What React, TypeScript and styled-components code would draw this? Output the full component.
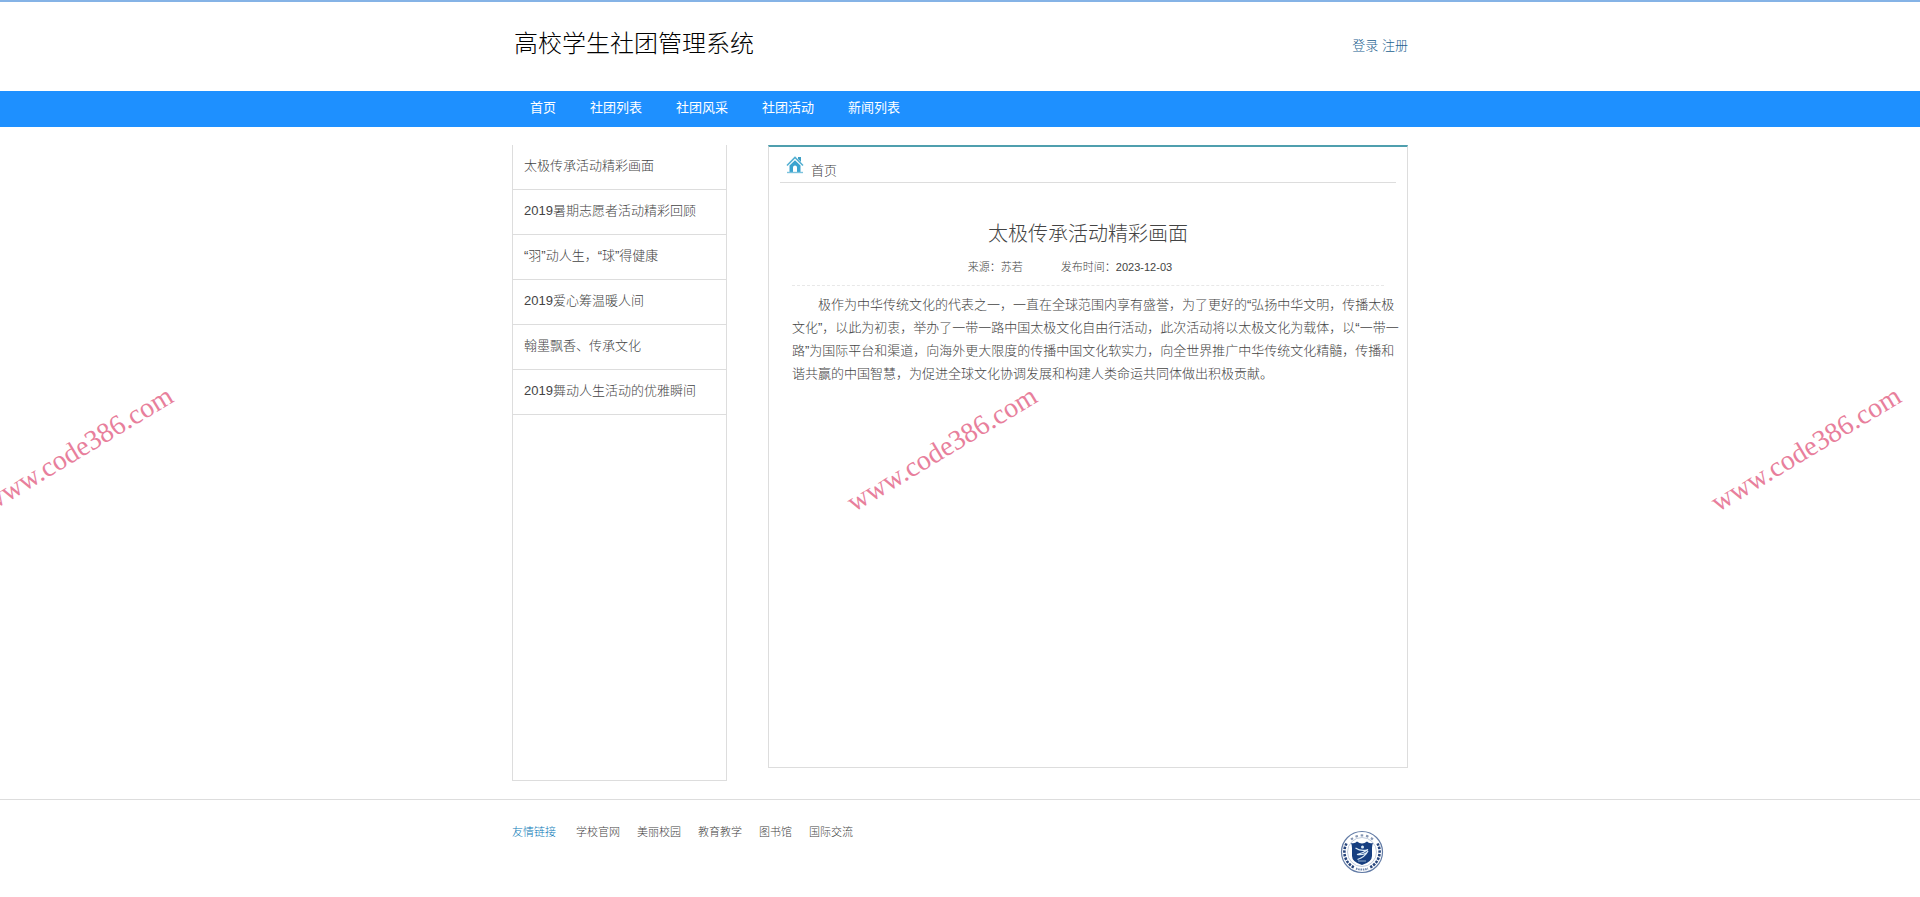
import React from "react";
import styled, { createGlobalStyle } from "styled-components";

const GlobalStyle = createGlobalStyle`
  *, *::before, *::after { box-sizing: border-box; }
  body {
    margin: 0;
    background: #fff;
    color: #444;
    font-family: "Liberation Sans", "Noto Sans CJK SC", sans-serif;
    font-size: 13px;
    font-weight: 300;
  }
  h1, h2, p, ul { margin: 0; padding: 0; font-weight: inherit; }
  ul { list-style: none; }
  a { color: inherit; text-decoration: none; }
`;

const Page = styled.div`
  position: relative;
  min-height: 100vh;
  border-top: 2px solid #85b3e6;
`;

const Container = styled.div`
  width: 100%;
  max-width: 896px;
  margin: 0 auto;
`;

const Header = styled(Container)`
  display: flex;
  align-items: center;
  justify-content: space-between;
  height: 89px;
`;

const SiteTitle = styled.h1`
  padding: 0 0 6px 2px;
  color: #000;
  font-size: 24px;
  line-height: 32px;
`;

const Account = styled.div`
  padding-bottom: 2px;
  color: #235f8f;
  line-height: 20px;
`;

const NavBar = styled.nav`
  background: #1e90ff;
`;

const NavList = styled.ul`
  display: flex;
  padding-left: 1px;
`;

const NavLink = styled.a`
  display: block;
  padding: 0 17px 2px;
  color: #fff;
  line-height: 34px;
  font-weight: 400;
`;

const Columns = styled(Container)`
  display: flex;
  justify-content: space-between;
  align-items: flex-start;
  gap: 40px;
  padding: 18px 0;
`;

const Sidebar = styled.aside`
  flex: 0 0 215px;
  min-height: 636px;
  border: 1px solid #ddd;
  border-top: 0;
`;

const SideLink = styled.a`
  display: block;
  padding: 0 11px 2px;
  border-bottom: 1px solid #ddd;
  line-height: 42px;
  white-space: nowrap;
`;

const Panel = styled.main`
  flex: 0 1 640px;
  min-width: 0;
  min-height: 623px;
  padding: 0 11px;
  border: 1px solid #ddd;
  border-top: 2px solid #4f9fae;
`;

const Crumbs = styled.div`
  display: flex;
  align-items: center;
  gap: 7px;
  height: 36px;
  padding-left: 6px;
  border-bottom: 1px solid #ddd;
`;

const CrumbLink = styled.a`
  padding-top: 12px;
  line-height: 20px;
`;

const Article = styled.article`
  padding: 33px 0 0 12px;
`;

const ArticleTitle = styled.h2`
  padding-right: 12px;
  font-size: 20px;
  line-height: 36px;
  text-align: center;
`;

const Meta = styled.div`
  display: flex;
  justify-content: center;
  gap: 38px;
  margin-right: 12px;
  padding: 5px 36px 8px 0;
  border-bottom: 1px dashed #e8e8e8;
  font-size: 11px;
  line-height: 20px;
`;

const Body = styled.p`
  padding-top: 7px;
  line-height: 23px;
  text-indent: 2em;
  white-space: nowrap;
`;

const Footer = styled.footer`
  border-top: 1px solid #ddd;
`;

const FooterRow = styled(Container)`
  display: flex;
  justify-content: space-between;
  padding: 22px 24px 22px 0;
`;

const FriendLinks = styled.ul`
  display: flex;
  gap: 17px;
  font-size: 11px;
  line-height: 20px;
`;

const FriendLabel = styled.li`
  padding-right: 3px;
  color: #0878b6;
`;

const Crest = styled.svg`
  margin-top: 8px;
`;

const Watermarks = styled.div`
  position: absolute;
  inset: 0;
  display: flex;
  justify-content: center;
  padding: 433px 36px 0 0;
  overflow: hidden;
  pointer-events: none;
`;

const Mark = styled.span`
  flex: 0 0 864px;
  height: 28px;
  color: #e87f9c;
  font-family: "Liberation Serif", serif;
  font-size: 28px;
  font-weight: 400;
  line-height: 28px;
  text-align: center;
  transform: rotate(-31deg);
`;

const navItems = ["首页", "社团列表", "社团风采", "社团活动", "新闻列表"];
const sideItems = [
  "太极传承活动精彩画面",
  "2019暑期志愿者活动精彩回顾",
  "“羽”动人生，“球”得健康",
  "2019爱心筹温暖人间",
  "翰墨飘香、传承文化",
  "2019舞动人生活动的优雅瞬间",
];
const friendItems = ["学校官网", "美丽校园", "教育教学", "图书馆", "国际交流"];

function HomeIcon() {
  return (
    <svg width="18" height="18" viewBox="0 0 18 18" aria-hidden="true">
      <path d="M12 1h3v5l-3-3z" fill="#3d9fc6" />
      <path d="M1 9.5 9 1.5l8 8" fill="none" stroke="#55b0d2" strokeWidth="1.6" />
      <path d="M3.5 9.5 9 4.2l5.5 5.3V16H11v-4.5a2 2 0 0 0-4 0V16H3.5z" fill="#3aa3cf" />
      <path d="M1 16.5h16" stroke="#7cc3dd" strokeWidth="1.4" />
    </svg>
  );
}

function SchoolCrest() {
  return (
    <Crest width="44" height="44" viewBox="0 0 44 44" role="img" aria-label="校徽">
      <circle cx="22" cy="22" r="20.5" fill="#fff" stroke="#637ca6" strokeWidth="1.2" />
      <circle cx="22" cy="22" r="14.5" fill="none" stroke="#a5b5cd" strokeWidth="0.7" />
      <path d="M6.5 13.5A17.500 17.500 0 0 0 14 37.500" fill="none" stroke="#27457c" strokeWidth="2.6" strokeDasharray="2.4 1.2" />
      <path d="M37.5 13.5A17.500 17.500 0 0 1 30 37.500" fill="none" stroke="#27457c" strokeWidth="2.6" strokeDasharray="2.4 1.2" />
      <path d="M11 9.5A17 17 0 0 1 33 9.5" fill="none" stroke="#8797b4" strokeWidth="2.2" strokeDasharray="2.5 2.8" />
      <path d="M16 38.5a17.500 17.500 0 0 0 12 0" fill="none" stroke="#6f86ad" strokeWidth="2" strokeDasharray="1.5 0.8" />
      <path d="M11 13q4 1 6-1.500 2.500 2 5 2t5-2q2 2.500 6 1.500-1 2-1 5v8q0 6-10 9-10-3-10-9v-8q0-3-1-5z" fill="#173f80" />
      <circle cx="22.5" cy="17" r="1.5" fill="#dcebf6" />
      <path d="M15.500 18q6 4 12.500 1.500-5 4-11 5 8 1 11-3.500-3 6-10.500 8.500" fill="none" stroke="#dcebf6" strokeWidth="1.2" />
      <path d="M18 31h8" stroke="#8eabc9" strokeWidth="1" />
    </Crest>
  );
}

export default function App() {
  return (
    <Page>
      <GlobalStyle />
      <Header as="header">
        <SiteTitle>高校学生社团管理系统</SiteTitle>
        <Account>
          <a href="#login">登录</a> <a href="#register">注册</a>
        </Account>
      </Header>
      <NavBar>
        <Container>
          <NavList>
            {navItems.map((item) => (
              <li key={item}>
                <NavLink href="#">{item}</NavLink>
              </li>
            ))}
          </NavList>
        </Container>
      </NavBar>
      <Columns>
        <Sidebar>
          <ul>
            {sideItems.map((item) => (
              <li key={item}>
                <SideLink href="#">{item}</SideLink>
              </li>
            ))}
          </ul>
        </Sidebar>
        <Panel>
          <Crumbs>
            <HomeIcon />
            <CrumbLink href="#">首页</CrumbLink>
          </Crumbs>
          <Article>
            <ArticleTitle>太极传承活动精彩画面</ArticleTitle>
            <Meta>
              <span>来源：苏若</span>
              <span>发布时间：2023-12-03</span>
            </Meta>
            <Body>
              极作为中华传统文化的代表之一，一直在全球范围内享有盛誉，为了更好的“弘扬中华文明，传播太极
              <br />
              文化”，以此为初衷，举办了一带一路中国太极文化自由行活动，此次活动将以太极文化为载体，以“一带一
              <br />
              路”为国际平台和渠道，向海外更大限度的传播中国文化软实力，向全世界推广中华传统文化精髓，传播和
              <br />
              谐共赢的中国智慧，为促进全球文化协调发展和构建人类命运共同体做出积极贡献。
            </Body>
          </Article>
        </Panel>
      </Columns>
      <Footer>
        <FooterRow>
          <FriendLinks>
            <FriendLabel>友情链接</FriendLabel>
            {friendItems.map((item) => (
              <li key={item}>
                <a href="#">{item}</a>
              </li>
            ))}
          </FriendLinks>
          <SchoolCrest />
        </FooterRow>
      </Footer>
      <Watermarks aria-hidden="true">
        <Mark>www.code386.com</Mark>
        <Mark>www.code386.com</Mark>
        <Mark>www.code386.com</Mark>
      </Watermarks>
    </Page>
  );
}
